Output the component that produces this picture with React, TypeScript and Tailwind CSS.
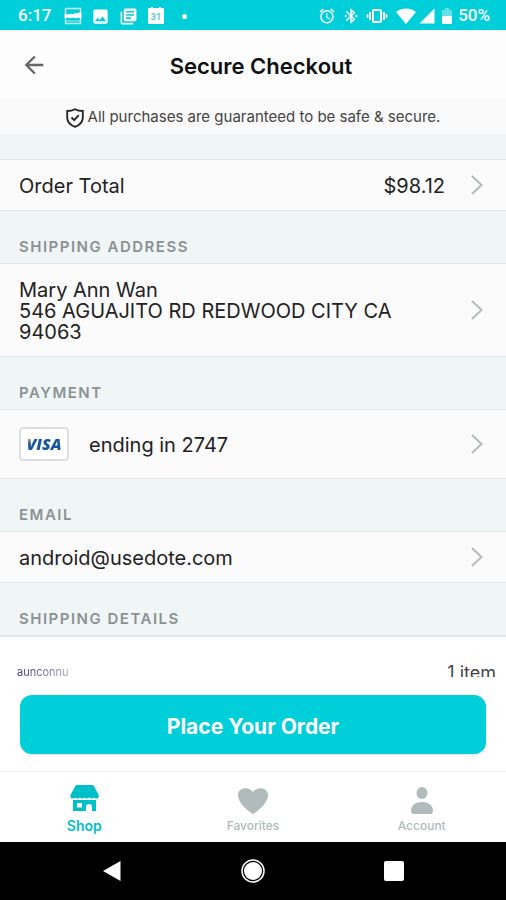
import type { ReactNode } from "react";
import {
  MdAlarm,
  MdBluetoothConnected,
  MdImage,
  MdLibraryBooks,
  MdSignalCellular4Bar,
  MdArrowBack,
} from "react-icons/md";

function StatusBar() {
  return (
    <div className="flex h-[30px] shrink-0 items-center justify-between bg-[#00ced8] pt-0.5 pl-[18px] pr-4 font-[Roboto,sans-serif] text-[17px] font-medium text-white">
      <div className="flex items-center gap-[9px]">
        <span className="mr-1">6:17</span>
        <svg viewBox="0 0 18 18" className="size-[18px]" fill="none" stroke="currentColor">
          <path d="M1.500 1.500h15v15h-15z" strokeWidth="1.400" opacity=".8" />
          <path d="M1 7l4 1 2-1 2 1 2-2 2 1 2-1 2 0v5l-3-1-2 1-3-1-3 1-2-1-3 1z" fill="currentColor" />
          <path d="M2 14h14" opacity=".6" />
        </svg>
        <MdImage className="size-[19px]" />
        <MdLibraryBooks className="size-[19px]" />
        <svg viewBox="0 0 18 18" className="size-[18px]">
          <path d="M2 1h2V0h2v1h6V0h2v1h2a1 1 0 0 1 1 1v14a1 1 0 0 1-1 1H2a1 1 0 0 1-1-1V2a1 1 0 0 1 1-1z" fill="white" />
          <text x="9" y="13" textAnchor="middle" fontSize="9" fontWeight="700" fill="#5fc9d1">
            31
          </text>
        </svg>
        <span className="ml-2 size-[5px] rounded-full bg-white" />
      </div>
      <div className="flex items-center">
        <MdAlarm className="mr-1.5 size-[18px]" />
        <MdBluetoothConnected className="mr-1.5 size-[18px]" />
        <svg viewBox="0 0 22 18" className="mr-2 h-[18px] w-[22px]" fill="none" stroke="currentColor" strokeWidth="2">
          <rect x="7" y="3" width="8" height="12" rx="1" />
          <path d="M4 5v8M18 5v8" />
          <path d="M1.500 7v4M20.500 7v4" strokeWidth="1.600" />
        </svg>
        <svg viewBox="0 0 20 16" className="mr-0.5 h-4 w-5" fill="currentColor">
          <path d="M0 4C6-.6 14-.6 20 4L10 16z" />
        </svg>
        <MdSignalCellular4Bar className="mr-1.5 size-[18px]" />
        <svg viewBox="0 0 10 16" className="mr-1.5 h-4 w-2.5" fill="currentColor">
          <path d="M3 0h4v2h3v6H0V2h3z" opacity=".4" />
          <path d="M0 8h10v7a1 1 0 0 1-1 1H1a1 1 0 0 1-1-1z" />
        </svg>
        <span>50%</span>
      </div>
    </div>
  );
}

function Chevron() {
  return (
    <svg viewBox="0 0 12 20" className="h-5 w-3 shrink-0" fill="none" stroke="#b4bbbb" strokeWidth="2">
      <path d="M1 1l9.500 9L1 19" />
    </svg>
  );
}

function Row({ className, children }: { className: string; children: ReactNode }) {
  return (
    <button
      type="button"
      className={`flex w-full items-center justify-between border-y border-[#e2e5e5] bg-[#fbfbfb] pl-[19px] pr-[23px] text-left ${className}`}
    >
      {children}
      <Chevron />
    </button>
  );
}

function SectionTitle({ children }: { children: ReactNode }) {
  return (
    <h2 className="flex h-[52px] items-end pb-1.5 pl-[19px] text-[15px] leading-5 font-semibold tracking-widest text-[#8c9293]">
      {children}
    </h2>
  );
}

function VisaCard() {
  return (
    <span className="flex h-[34px] w-[50px] items-center justify-center rounded-sm border-2 border-[#dcdfe1] bg-white font-['Open_Sans',sans-serif] text-base font-extrabold italic">
      <span className="bg-linear-to-br from-[#e9b04c] from-15% to-[#17559c] to-30% bg-clip-text text-transparent">VISA</span>
    </span>
  );
}

function Tab({ label, active, children }: { label: string; active?: boolean; children: ReactNode }) {
  return (
    <a
      href="#"
      className={`flex flex-1 flex-col items-center pt-3 ${active ? "text-sm font-semibold text-[#00bfc9]" : "text-xs font-medium text-[#b1bbbb]"}`}
    >
      <svg viewBox="0 0 32 30" className="h-[30px] w-8" fill="currentColor">
        {children}
      </svg>
      <span className="leading-6">{label}</span>
    </a>
  );
}

export default function App() {
  return (
    <div className="flex h-screen flex-col bg-[#f0f5f6] font-[Inter,sans-serif] text-[#222]">
      <StatusBar />

      <header className="grid h-[69px] shrink-0 grid-cols-[1fr_auto_1fr] items-center bg-[#fdfdfd] px-5">
        <button type="button" aria-label="Back" className="w-7 text-[#666]">
          <MdArrowBack className="size-7" />
        </button>
        <h1 className="pt-1 pl-4 text-[22px] font-semibold text-[#111]">Secure Checkout</h1>
      </header>

      <p className="flex h-[35px] shrink-0 items-center justify-center gap-1 bg-[#fafafa] pt-0.5 text-[15px] text-[#444]">
        <svg viewBox="0 0 18 20" className="h-5 w-[18px]" fill="none" stroke="#222" strokeWidth="1.800">
          <path d="M9 1.200C6.500 2.600 4 3 1.200 3v6.500c0 4.500 3 7.500 7.800 9.300 4.800-1.800 7.800-4.800 7.800-9.300V3C14 3 11.500 2.600 9 1.200z" />
          <path d="M5.500 9.500l2.700 2.700 4.600-5" />
        </svg>
        All purchases are guaranteed to be safe &amp; secure.
      </p>

      <main className="min-h-0 flex-1 overflow-y-auto pt-[25px] text-xl leading-[21px] [scrollbar-width:none]">
        <Row className="h-[52px]">
          <span className="flex-1 pt-[3px]">Order Total</span>
          <span className="mr-[26px] pt-[3px]">$98.12</span>
        </Row>

        <SectionTitle>SHIPPING ADDRESS</SectionTitle>
        <Row className="h-[94px]">
          <address className="pt-[3px] not-italic">
            Mary Ann Wan
            <br />
            546 AGUAJITO RD REDWOOD CITY CA
            <br />
            94063
          </address>
        </Row>

        <SectionTitle>PAYMENT</SectionTitle>
        <Row className="h-[70px]">
          <VisaCard />
          <span className="flex-1 pt-[3px] pl-5">ending in 2747</span>
        </Row>

        <SectionTitle>EMAIL</SectionTitle>
        <Row className="h-[52px]">
          <span className="pt-[3px]">android@usedote.com</span>
        </Row>

        <SectionTitle>SHIPPING DETAILS</SectionTitle>
        <div className="flex h-24 items-start justify-between border-t-2 border-[#e2e5e5] bg-white pt-[25px] pr-2.5 pl-[17px]">
          <span className="bg-linear-to-r from-[#3d3560] to-[#a9a5b8] bg-clip-text text-[11px] text-transparent">
            aunconnu
          </span>
          <span className="text-lg leading-[21px] text-[#444]">1 item</span>
        </div>
      </main>

      <div className="shrink-0 bg-white px-5 pt-[18px] pb-[17px]">
        <button
          type="button"
          className="h-[59px] w-full rounded-xl bg-[#00ced8] pt-1 text-[21px] font-bold text-white shadow-sm"
        >
          Place Your Order
        </button>
      </div>

      <nav className="flex h-[71px] shrink-0 border-t border-[#f1f2f2] bg-white">
        <Tab label="Shop" active>
          <path d="M9 1h15.500a1 1 0 0 1 1 .5l5 9c1 2 0 4-2 4-1.200 0-2-.4-2.500-1-1 1.300-3.500 1.300-4.700 0-1.200 1.300-3.500 1.300-4.700 0-1.200 1.300-3.500 1.300-4.700 0-1.200 1.300-3.500 1.300-4.700 0-.5.600-1.300 1-2.500 1-2 0-3-2-2-4l5-9A1.500 1.500 0 0 1 9 1z" />
          <path d="M5 16h23v11h-4v-4a3 3 0 0 0-6 0v4H5zm4 3v4.500h5V19z" fillRule="evenodd" />
        </Tab>
        <Tab label="Favorites">
          <path d="M16 30C11 27 1 19 1 11c0-8 11-9 15-3 4-6 15-5 15 3 0 8-10 16-15 19z" />
        </Tab>
        <Tab label="Account">
          <ellipse cx="16" cy="9" rx="5.500" ry="6" />
          <path d="M8 30c-3 0-3.500-2.500-2.500-6C7 20 11 18 16 18s9 2 10.500 6c1 3.500.5 6-2.500 6z" />
        </Tab>
      </nav>

      <div className="grid h-[58px] shrink-0 grid-cols-3 items-center justify-items-center bg-black px-[42px] text-white">
        <button type="button" aria-label="System back">
          <svg viewBox="0 0 20 22" className="h-[22px] w-5" fill="currentColor">
            <path d="M1 11L18.500 1v20z" />
          </svg>
        </button>
        <button type="button" aria-label="Home">
          <svg viewBox="0 0 24 24" className="size-6" fill="currentColor">
            <circle cx="12" cy="12" r="11" fill="none" stroke="currentColor" strokeWidth="1.500" />
            <circle cx="12" cy="12" r="9" />
          </svg>
        </button>
        <button type="button" aria-label="Recent apps">
          <span className="block size-5 rounded-xs bg-white" />
        </button>
      </div>
    </div>
  );
}
